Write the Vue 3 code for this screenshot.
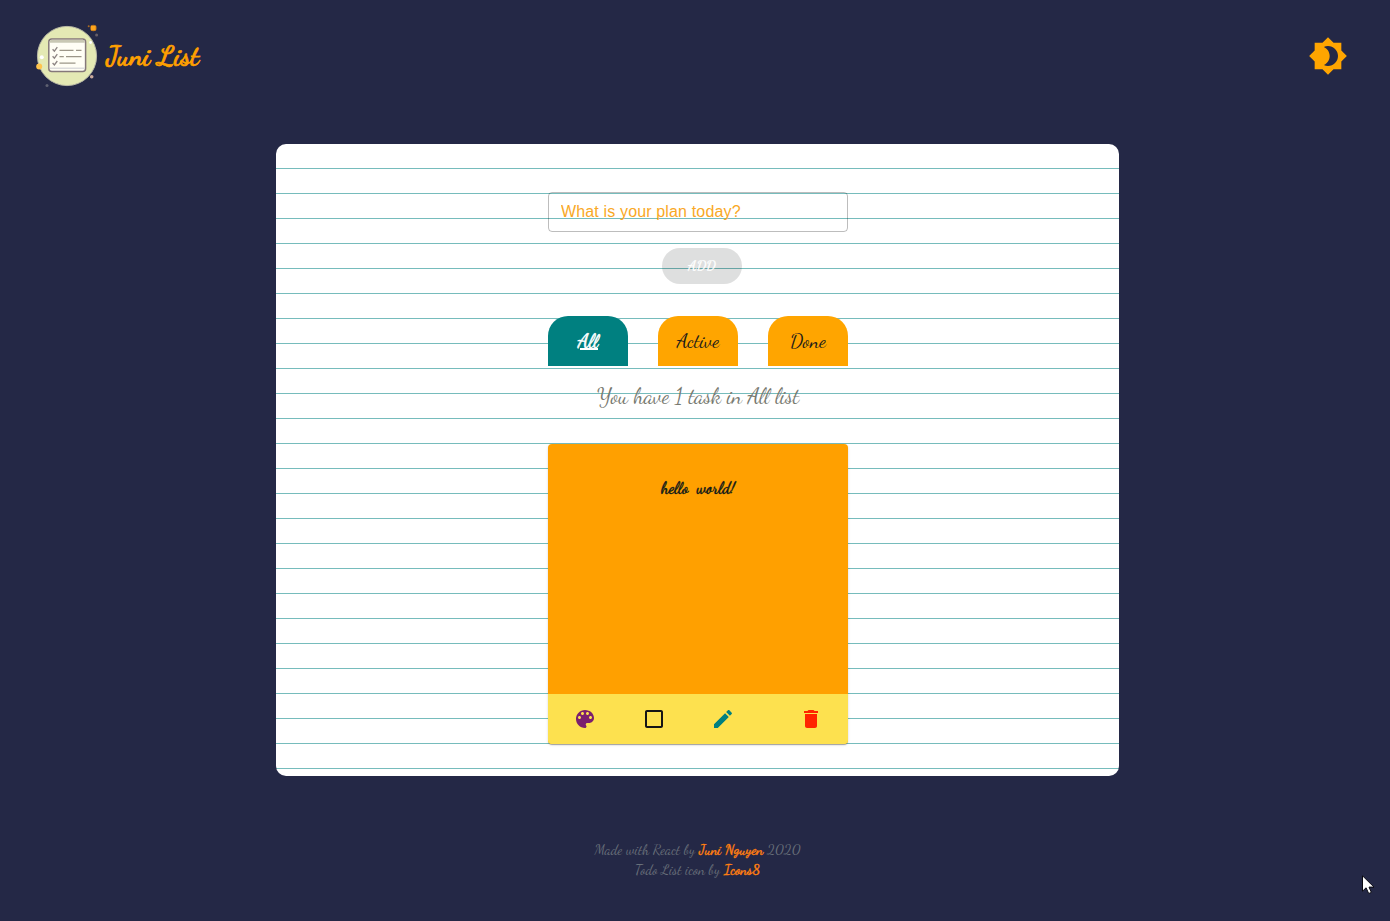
<script setup>
const filters = [
  { name: 'All', active: true },
  { name: 'Active', active: false },
  { name: 'Done', active: false },
]
</script>

<template>
  <div class="page">
    <header class="header">
      <div class="brand">
        <svg class="logo" viewBox="32 20 70 72" width="70" height="72">
          <circle cx="67" cy="56" r="29.6" fill="#e4e9b4" stroke="#b9b9a5" stroke-width="1" />
          <rect x="48.8" y="39" width="36.8" height="32.4" rx="3" fill="#fffef5" stroke="#85787a" stroke-width="1.5" />
          <path d="M49.6 42.8V42q0-2.2 2.2-2.2h30.8q2.2 0 2.2 2.2v.8z" fill="#c9c8b4" />
          <path d="M50 68.2h35" stroke="#dcdcdc" stroke-width="1.6" />
          <g fill="none" stroke="#8d8583" stroke-width="1.3">
            <path d="M52.6 49.2l1.8 2 2.9-4M52.6 56.2l1.8 2 2.9-4M52.6 63l1.8 2 2.9-4" />
            <path d="M59.5 50.3h14M76 50.3h5.5M59.5 56.7h4.3M66 56.7h15.5M59.5 63.2h16" stroke="#9c9688" />
          </g>
          <circle cx="93.4" cy="28" r="3.3" fill="#a96a21" />
          <rect x="91" y="25.8" width="4.7" height="4.6" fill="#ffa51b" />
          <circle cx="88.7" cy="26.3" r="1" fill="#a96a21" />
          <circle cx="96.6" cy="35" r="1.5" fill="#675e67" />
          <circle cx="90.6" cy="42.5" r="1.4" fill="#fff" />
          <circle cx="41.8" cy="57.2" r="2" fill="#fff" />
          <circle cx="39.2" cy="66.5" r="3" fill="#ffc44d" />
          <circle cx="91.7" cy="76.7" r="1.8" fill="#c9a99b" />
          <circle cx="47" cy="85.5" r="1.5" fill="#5e6070" />
        </svg>
        <span class="brand-name">Juni List</span>
      </div>
      <svg class="theme" viewBox="0 0 24 24" width="40" height="40">
        <path d="M20 8.69V4h-4.69L12 .69 8.69 4H4v4.69L.69 12 4 15.31V20h4.69L12 23.31 15.31 20H20v-4.69L23.31 12 20 8.69zM12 18c-.89 0-1.74-.2-2.5-.55C11.56 16.5 13 14.42 13 12s-1.44-4.5-3.5-5.45C10.26 6.2 11.11 6 12 6c3.31 0 6 2.69 6 6s-2.69 6-6 6z" />
      </svg>
    </header>

    <main class="paper">
      <div class="column">
        <input class="plan" type="text" placeholder="What is your plan today?" />
        <button class="add" type="button">ADD</button>

        <nav class="filters">
          <button v-for="f in filters" :key="f.name" type="button" class="filter" :class="{ active: f.active }">{{ f.name }}</button>
        </nav>

        <div class="count">You have 1 task in All list</div>

        <article class="note">
          <div class="note-text">hello&nbsp; world!</div>
          <div class="tools">
            <svg class="purple" viewBox="0 0 24 24" width="24" height="24"><path d="M12 3c-4.97 0-9 4.03-9 9s4.03 9 9 9c.83 0 1.5-.67 1.5-1.5 0-.39-.15-.74-.39-1.01-.23-.26-.38-.61-.38-.99 0-.83.67-1.5 1.5-1.5H16c2.76 0 5-2.24 5-5 0-4.42-4.03-8-9-8zm-5.5 9c-.83 0-1.5-.67-1.5-1.5S5.67 9 6.5 9 8 9.67 8 10.5 7.33 12 6.5 12zm3-4C8.67 8 8 7.33 8 6.5S8.67 5 9.5 5s1.5.67 1.5 1.5S10.33 8 9.5 8zm5 0c-.83 0-1.5-.67-1.5-1.5S13.67 5 14.5 5s1.5.67 1.5 1.5S15.33 8 14.5 8zm3 4c-.83 0-1.5-.67-1.5-1.5S16.67 9 17.5 9s1.5.67 1.5 1.5-.67 1.5-1.5 1.5z" /></svg>
            <svg class="black" viewBox="0 0 24 24" width="24" height="24"><path d="M19 5v14H5V5h14m0-2H5c-1.1 0-2 .9-2 2v14c0 1.1.9 2 2 2h14c1.1 0 2-.9 2-2V5c0-1.1-.9-2-2-2z" /></svg>
            <svg class="teal" viewBox="0 0 24 24" width="24" height="24"><path d="M3 17.25V21h3.75L17.81 9.94l-3.75-3.75L3 17.25zM20.71 7.04c.39-.39.39-1.02 0-1.41l-2.34-2.34c-.39-.39-1.02-.39-1.41 0l-1.83 1.83 3.75 3.75 1.83-1.83z" /></svg>
            <svg class="red" viewBox="0 0 24 24" width="24" height="24"><path d="M6 19c0 1.1.9 2 2 2h8c1.1 0 2-.9 2-2V7H6v12zM19 4h-3.5l-1-1h-5l-1 1H5v2h14V4z" /></svg>
          </div>
        </article>
      </div>
    </main>

    <footer class="footer">
      <div>Made with React by <a>Juni Nguyen</a> 2020</div>
      <div>Todo List icon by <a>Icons8</a></div>
    </footer>

    <svg class="pointer" viewBox="0 0 13 20" width="13" height="20">
      <path d="M.5.8v15.4l3.6-3.4 2.6 5.7 2.7-1.1-2.4-5.3h5z" fill="#fff" stroke="#0b0b12" stroke-width="1" />
    </svg>
  </div>
</template>

<style>
body {
  margin: 0;
  background: #242846;
}
</style>

<style scoped>
.page {
  position: relative;
  box-sizing: border-box;
  width: 1390px;
  height: 921px;
  overflow: hidden;
  background: #242846;
  font-family: "Dancing Script", "Liberation Serif", cursive;
}
.header {
  display: flex;
  align-items: center;
  justify-content: space-between;
  height: 72px;
  padding: 20px 42px 0 32px;
}
.brand {
  display: flex;
  align-items: center;
  gap: 4px;
  color: #ffa000;
}
.brand-name {
  font-size: 28px;
  font-weight: 700;
  -webkit-text-stroke: 0.7px currentColor;
}
.theme {
  fill: #ffa500;
}
.paper {
  box-sizing: border-box;
  width: 843px;
  height: 632px;
  margin: 52px 0 0 276px;
  padding: 48px 0 0 272px;
  border-radius: 10px;
  background: repeating-linear-gradient(#fff 0 24px, #76bcbc 24px 25px);
}
.column {
  display: flex;
  flex-direction: column;
  width: 300px;
}
.plan {
  box-sizing: border-box;
  width: 300px;
  height: 40px;
  padding: 0 12px;
  border: 1px solid rgba(0, 0, 0, 0.26);
  border-radius: 4px;
  outline: none;
  background: transparent;
  font: 16px "Liberation Sans", Arial, sans-serif;
  letter-spacing: 0.15px;
}
.plan::placeholder {
  color: #f9a825;
  opacity: 1;
}
.add,
.filter {
  padding: 0;
  border: 0;
  font-family: inherit;
}
.add {
  width: 80px;
  height: 36px;
  margin: 16px 0 0 114px;
  padding-bottom: 2px;
  border-radius: 18px;
  background: rgba(0, 10, 5, 0.13);
  color: #fff;
  font-size: 14px;
  font-weight: 600;
  letter-spacing: 0.3px;
  -webkit-text-stroke: 0.2px currentColor;
}
.filters {
  display: flex;
  justify-content: space-between;
  margin-top: 32px;
}
.filter {
  position: relative;
  width: 80px;
  height: 50px;
  border-radius: 20px 20px 0 0;
  background: #ffa500;
  color: #1a1a1a;
  font-size: 20px;
}
.filter.active {
  background: #008080;
  color: #fff;
  -webkit-text-stroke: 0.5px currentColor;
}
.filter.active::after {
  content: "";
  position: absolute;
  left: 32px;
  top: 32px;
  width: 18px;
  height: 2px;
  background: #fff;
}
.count {
  height: 63px;
  padding-top: 15px;
  color: #77796f;
  font-size: 21.6px;
  line-height: 30px;
  text-align: center;
}
.note {
  display: flex;
  flex-direction: column;
  height: 300px;
  overflow: hidden;
  border-radius: 4px;
  background: #ffa000;
  box-shadow: 0 2px 1px -1px rgba(0, 0, 0, 0.2), 0 1px 1px rgba(0, 0, 0, 0.14), 0 1px 3px rgba(0, 0, 0, 0.12);
}
.note-text {
  flex: 1;
  padding-top: 29px;
  color: #111a1a;
  font-size: 16px;
  font-weight: 700;
  line-height: 30px;
  text-align: center;
  -webkit-text-stroke: 0.3px currentColor;
}
.tools {
  display: flex;
  align-items: center;
  gap: 45px;
  height: 50px;
  padding: 0 25px;
  background: #fde14f;
}
.purple { fill: #7b1f6e; }
.black { fill: #151515; }
.teal { fill: #008080; }
.red {
  margin-left: auto;
  fill: #ff2400;
}
.footer {
  margin-top: 64px;
  padding-left: 5px;
  color: #69707a;
  font-size: 14px;
  line-height: 20px;
  letter-spacing: 0.08px;
  text-align: center;
}
.footer a {
  color: #ff7f11;
  font-weight: 700;
  -webkit-text-stroke: 0.3px currentColor;
}
.pointer {
  position: absolute;
  left: 1362px;
  top: 875px;
}
</style>
